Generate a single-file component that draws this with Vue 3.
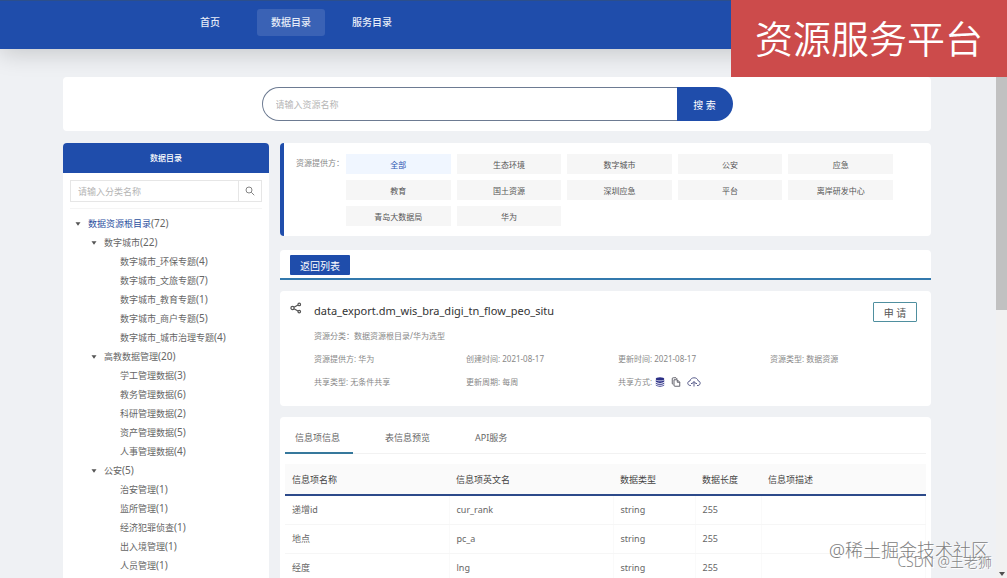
<script setup>
import { ref } from 'vue'

const navItems = ['首页', '数据目录', '服务目录']
const activeNav = ref('数据目录')

const keyword = ref('')
const categoryKeyword = ref('')

const tree = ref([
  { label: '数据资源根目录', count: 72, level: 0, active: true },
  { label: '数字城市', count: 22, level: 1 },
  { label: '数字城市_环保专题', count: 4, level: 2 },
  { label: '数字城市_文旅专题', count: 7, level: 2 },
  { label: '数字城市_教育专题', count: 1, level: 2 },
  { label: '数字城市_商户专题', count: 5, level: 2 },
  { label: '数字城市_城市治理专题', count: 4, level: 2 },
  { label: '高教数据管理', count: 20, level: 1 },
  { label: '学工管理数据', count: 3, level: 2 },
  { label: '教务管理数据', count: 6, level: 2 },
  { label: '科研管理数据', count: 2, level: 2 },
  { label: '资产管理数据', count: 5, level: 2 },
  { label: '人事管理数据', count: 4, level: 2 },
  { label: '公安', count: 5, level: 1 },
  { label: '治安管理', count: 1, level: 2 },
  { label: '监所管理', count: 1, level: 2 },
  { label: '经济犯罪侦查', count: 1, level: 2 },
  { label: '出入境管理', count: 1, level: 2 },
  { label: '人员管理', count: 1, level: 2 },
])

const providers = [
  '全部', '生态环境', '数字城市', '公安', '应急',
  '教育', '国土资源', '深圳应急', '平台', '离岸研发中心',
  '青岛大数据局', '华为',
]
const activeProvider = ref('全部')

const metas = [
  '资源提供方: 华为',
  '创建时间: 2021-08-17',
  '更新时间: 2021-08-17',
  '资源类型: 数据资源',
  '共享类型: 无条件共享',
  '更新周期: 每周',
]

const tabs = ['信息项信息', '表信息预览', 'API服务']
const activeTab = ref('信息项信息')

const rows = [
  { name: '递增id', en: 'cur_rank', type: 'string', length: 255, desc: '' },
  { name: '地点', en: 'pc_a', type: 'string', length: 255, desc: '' },
  { name: '经度', en: 'lng', type: 'string', length: 255, desc: '' },
]
</script>

<template>
  <div class="page">
    <header class="header">
      <nav class="nav">
        <a
          v-for="item in navItems"
          :key="item"
          href="#"
          class="nav-item"
          :class="{ active: activeNav === item }"
          @click.prevent="activeNav = item"
        >{{ item }}</a>
      </nav>
    </header>
    <h1 class="banner">资源服务平台</h1>

    <div class="container">
      <section class="panel search-panel">
        <form class="search" @submit.prevent>
          <input v-model="keyword" class="search-input" type="text" aria-label="资源名称" placeholder="请输入资源名称" />
          <button type="submit" class="search-btn">搜 索</button>
        </form>
      </section>

      <div class="columns">
        <aside class="panel sidebar">
          <h2 class="sidebar-title">数据目录</h2>
          <form class="category-search" @submit.prevent>
            <input v-model="categoryKeyword" class="category-input" type="text" aria-label="分类名称" placeholder="请输入分类名称" />
            <button type="submit" class="category-btn" aria-label="搜索">
              <svg width="10" height="10" viewBox="0 0 20 20" fill="none" stroke="currentColor" stroke-width="1.8">
                <circle cx="8" cy="8" r="6" /><path d="M12.5 12.5 18.5 18.5" />
              </svg>
            </button>
          </form>
          <ul class="tree">
            <li
              v-for="node in tree"
              :key="node.label"
              class="tree-node"
              :class="['level-' + node.level, { active: node.active }]"
            >
              <svg v-if="node.level < 2" class="caret" width="6" height="4" viewBox="0 0 6 4"><path d="M.5.3h5L3 3.700z" fill="currentColor" /></svg>
              <span class="tree-label">{{ node.label }}</span>
              <span class="tree-count">({{ node.count }})</span>
            </li>
          </ul>
        </aside>

        <main class="main">
          <section class="panel filter">
            <span class="filter-label">资源提供方：</span>
            <div class="filter-grid">
              <button
                v-for="p in providers"
                :key="p"
                type="button"
                class="filter-btn"
                :class="{ active: activeProvider === p }"
                @click="activeProvider = p"
              >{{ p }}</button>
            </div>
          </section>

          <section class="panel back-bar">
            <button type="button" class="back-btn">返回列表</button>
          </section>

          <section class="panel detail">
            <svg class="share-icon" width="12" height="12" viewBox="0 0 24 24" fill="none" stroke="currentColor" stroke-width="2.4">
              <circle cx="5" cy="12" r="3.2" /><circle cx="18.5" cy="4.8" r="2.6" /><circle cx="18.5" cy="19.2" r="2.6" />
              <path d="M8 10.6 16 6M8 13.4 16 18" />
            </svg>
            <div class="detail-body">
              <div class="detail-head">
                <h2 class="detail-title">data_export.dm_wis_bra_digi_tn_flow_peo_situ</h2>
                <button type="button" class="apply-btn">申 请</button>
              </div>
              <p class="meta-line">资源分类：数据资源根目录/华为选型</p>
              <div class="meta-grid">
                <span v-for="m in metas" :key="m">{{ m }}</span>
                <span class="share-ways">
                  共享方式:
                  <span class="share-icons">
                    <svg width="10" height="10" viewBox="0 0 20 20" fill="#2b2f86">
                      <ellipse cx="10" cy="3.8" rx="8.5" ry="3.4" />
                      <path d="M1.5 5.8c2 3.6 15 3.6 17 0v3.4c-2 3.6-15 3.6-17 0z" />
                      <path d="M1.5 11.2c2 3.3 15 3.3 17 0v1.8c-2 3.6-15 3.6-17 0z" />
                      <path d="M1.5 15c2 3.3 15 3.3 17 0v1.6c-2 3.8-15 3.8-17 0z" />
                    </svg>
                    <svg width="10" height="10" viewBox="0 0 20 20" fill="none" stroke="#4a4a55" stroke-width="1.7">
                      <path d="M4.500 14.500C3 14.500 2.500 14 2.500 12.500V3.500C2.500 2 3 1.500 4.500 1.500h5.500l2.500 2.500" />
                      <path d="M6 5.500h6.500l5 5v8H8C6.500 18.500 6 18 6 16.500z" /><path d="M12.500 5.500v5H17.500" />
                    </svg>
                    <svg width="14" height="10" viewBox="0 0 28 20" fill="none" stroke="#3d4279" stroke-width="1.7">
                      <path d="M8 17H6.500C0 16.500 0 8.500 6 8 7 0 20.500-1 22 7.500c6 1 5.500 9 0 9.500h-2" />
                      <path d="M14 19V9.500M10 13l4-4 4 4M8 13h3M17 13h3" />
                    </svg>
                  </span>
                </span>
              </div>
            </div>
          </section>

          <section class="panel info">
            <div class="tabs" role="tablist">
              <button
                v-for="tab in tabs"
                :key="tab"
                type="button"
                role="tab"
                class="tab"
                :aria-selected="activeTab === tab"
                :class="{ active: activeTab === tab }"
                @click="activeTab = tab"
              >{{ tab }}</button>
            </div>
            <table class="info-table">
              <thead>
                <tr>
                  <th class="col-name">信息项名称</th>
                  <th class="col-name">信息项英文名</th>
                  <th class="col-type">数据类型</th>
                  <th class="col-length">数据长度</th>
                  <th>信息项描述</th>
                </tr>
              </thead>
              <tbody>
                <tr v-for="row in rows" :key="row.en">
                  <td>{{ row.name }}</td>
                  <td>{{ row.en }}</td>
                  <td>{{ row.type }}</td>
                  <td>{{ row.length }}</td>
                  <td>{{ row.desc }}</td>
                </tr>
              </tbody>
            </table>
          </section>
        </main>
      </div>
    </div>

    <div class="scrollbar" aria-hidden="true">
      <div class="scrollbar-thumb"></div>
      <svg class="scrollbar-arrow" width="6" height="4" viewBox="0 0 6 4"><path d="M0 0h6L3 4z" fill="#505050" /></svg>
    </div>
    <div class="mark mark-community">@稀土掘金技术社区</div>
    <div class="mark mark-author">CSDN @王老狮</div>
  </div>
</template>

<style>
body {
  margin: 0;
  background: #eff1f4;
}
</style>

<style scoped>
.page {
  position: relative;
  height: 100vh;
  overflow: hidden;
  font-family: "Noto Sans", "Noto Sans CJK SC", sans-serif;
  font-size: 9px;
  color: #666;
  background: #eff1f4;
}
.page * { box-sizing: border-box; }

button, input {
  font-family: inherit;
  margin: 0;
  padding: 0;
  border: 0;
  outline: none;
}
button { cursor: pointer; }
svg { display: block; flex: none; }

.header {
  height: 49px;
  padding: 8px 0 0 176px;
  background: #1f4dab;
  border-top: 1px solid #2c4f8c;
  box-shadow: 0 4px 24px rgba(0, 0, 0, 0.18);
}
.nav { display: flex; gap: 13px; }
.nav-item {
  width: 68px;
  line-height: 27px;
  border-radius: 3px;
  font-size: 10px;
  font-weight: 500;
  text-align: center;
  text-decoration: none;
  color: #e6ecf8;
}
.nav-item.active { background: #3a62b5; }

.banner {
  position: absolute;
  top: 0;
  right: 0;
  z-index: 3;
  margin: 0;
  padding: 0 24px;
  line-height: 77px;
  font-size: 38px;
  font-weight: 350;
  color: #fff;
  background: #cc4b4b;
}

.container { padding: 28px 76px 0 63px; }

.panel {
  background: #fff;
  border-radius: 4px;
}

.search-panel {
  position: relative;
  padding: 10px 0;
}
.search {
  display: flex;
  width: 471px;
  height: 34px;
  margin: 0 auto;
}
.search-input {
  flex: 1;
  padding-left: 13px;
  border: 1px solid #6d7b92;
  border-right: 0;
  border-radius: 17px 0 0 17px;
  font-size: 9px;
  color: #333;
  background: #fff;
}
.search-btn {
  width: 56px;
  border-radius: 0 17px 17px 0;
  font-size: 10px;
  color: #fff;
  background: #1f4dab;
}
input::placeholder { color: #b5b5b5; }

.columns {
  display: flex;
  gap: 11px;
  margin-top: 12px;
}

.sidebar {
  flex: none;
  width: 206px;
  min-height: 440px;
  overflow: hidden;
}
.sidebar-title {
  margin: 0;
  line-height: 30px;
  font-size: 8px;
  font-weight: 500;
  text-align: center;
  color: #fff;
  background: #1f4dab;
}
.category-search {
  display: flex;
  height: 22px;
  margin: 7px 7px 0;
  border: 1px solid #e6e6e6;
}
.category-input {
  flex: 1;
  min-width: 0;
  padding-left: 7px;
  font-size: 9px;
}
.category-btn {
  display: flex;
  align-items: center;
  justify-content: center;
  width: 23px;
  border-left: 1px solid #e6e6e6;
  color: #777;
  background: #fff;
}

.tree {
  margin: 6px 7px 0;
  padding: 5px 0 0;
  border-top: 1px solid #f5f5f5;
  list-style: none;
}
.tree-node {
  display: flex;
  align-items: center;
  line-height: 19px;
  white-space: nowrap;
}
.tree-node.level-0 { padding-left: 5px; }
.tree-node.level-1 { padding-left: 21px; }
.tree-node.level-2 { padding-left: 50px; }
.tree-node.active .tree-label { color: #2b4f9e; }
.tree-count { font-size: 10px; }
.caret { margin-right: 7px; color: #555; }

.main {
  flex: 1;
  min-width: 0;
}

.filter {
  display: flex;
  padding: 11px 38px 10px 12px;
  border-left: 4px solid #1f4dab;
  font-size: 8px;
}
.filter-label {
  width: 50px;
  line-height: 18px;
  color: #888;
}
.filter-grid {
  flex: 1;
  display: grid;
  grid-template-columns: repeat(5, 1fr);
  gap: 6px;
}
.filter-btn {
  height: 20px;
  font-size: 8px;
  color: #555;
  background: #f6f6f6;
}
.filter-btn.active { color: #2b55b0; background: #f0f6ff; }

.back-bar {
  margin-top: 14px;
  padding: 5px 10px 3px;
  border-bottom: 2px solid #3379ad;
  border-radius: 4px 4px 0 0;
}
.back-btn {
  display: block;
  width: 60px;
  height: 20px;
  border-radius: 1px;
  font-size: 10px;
  color: #fff;
  background: #1f4dab;
}

.detail {
  display: flex;
  gap: 12px;
  margin-top: 11px;
  padding: 11px 14px 13px 10px;
}
.share-icon { color: #555; }
.detail-body { flex: 1; }
.detail-head {
  display: flex;
  align-items: flex-start;
  justify-content: space-between;
  padding-right: 5px;
}
.detail-title {
  margin: 0;
  font-size: 11px;
  line-height: 18px;
  font-weight: 400;
  color: #333;
}
.apply-btn {
  width: 44px;
  height: 20px;
  border: 1px solid #4f8f9f;
  border-radius: 1px;
  font-size: 10px;
  color: #555;
  background: #fff;
}
.meta-line {
  margin: 2px 0 0;
  line-height: 23px;
  font-size: 8px;
  color: #888;
}
.meta-grid {
  display: grid;
  grid-template-columns: repeat(4, 152px);
  line-height: 23px;
  font-size: 8px;
  color: #888;
}
.share-ways {
  display: flex;
  align-items: center;
  gap: 3px;
}
.share-icons {
  display: flex;
  gap: 6px;
}

.info {
  margin-top: 11px;
  padding: 13px 5px 0;
}
.tabs {
  display: flex;
  gap: 22px;
  border-bottom: 1px solid #f2f2f2;
}
.tab {
  min-width: 68px;
  height: 23px;
  padding: 0 10px 7px;
  line-height: 16px;
  font-size: 9px;
  text-align: left;
  color: #666;
  background: none;
}
.tab.active { box-shadow: 0 1px 0 #36789c, inset 0 -1px 0 #36789c; }

.info-table {
  width: 100%;
  margin-top: 10px;
  border-collapse: collapse;
  table-layout: fixed;
  text-align: left;
}
.col-name { width: 164px; }
.col-type { width: 82px; }
.col-length { width: 66px; }
.info-table th {
  height: 31px;
  padding: 0 7px;
  border-bottom: 2px solid #2c4a8a;
  font-size: 9px;
  font-weight: 400;
  color: #444;
  background: #fafafa;
}
.info-table td {
  height: 29px;
  padding: 0 7px;
  border-bottom: 1px solid #f6f6f6;
  border-right: 1px solid #fafafa;
}

.scrollbar {
  position: absolute;
  top: 0;
  right: 0;
  bottom: 0;
  display: flex;
  flex-direction: column;
  align-items: center;
  justify-content: space-between;
  width: 11px;
  background: #f1f1f1;
}
.scrollbar-thumb {
  width: 100%;
  height: 310px;
  background: #c1c1c1;
}
.scrollbar-arrow { margin-bottom: 2px; }

.mark {
  position: absolute;
  white-space: nowrap;
}
.mark-community {
  right: 18px;
  bottom: 16px;
  font-size: 18px;
  line-height: 24px;
  font-weight: 300;
  color: #808080;
  text-shadow: 1px 1px 0 #fff;
}
.mark-author {
  right: 15px;
  bottom: 7px;
  font-size: 14px;
  line-height: 18px;
  font-weight: 300;
  color: #858585;
  text-shadow: 1px 1px 0 #fff;
}
</style>
